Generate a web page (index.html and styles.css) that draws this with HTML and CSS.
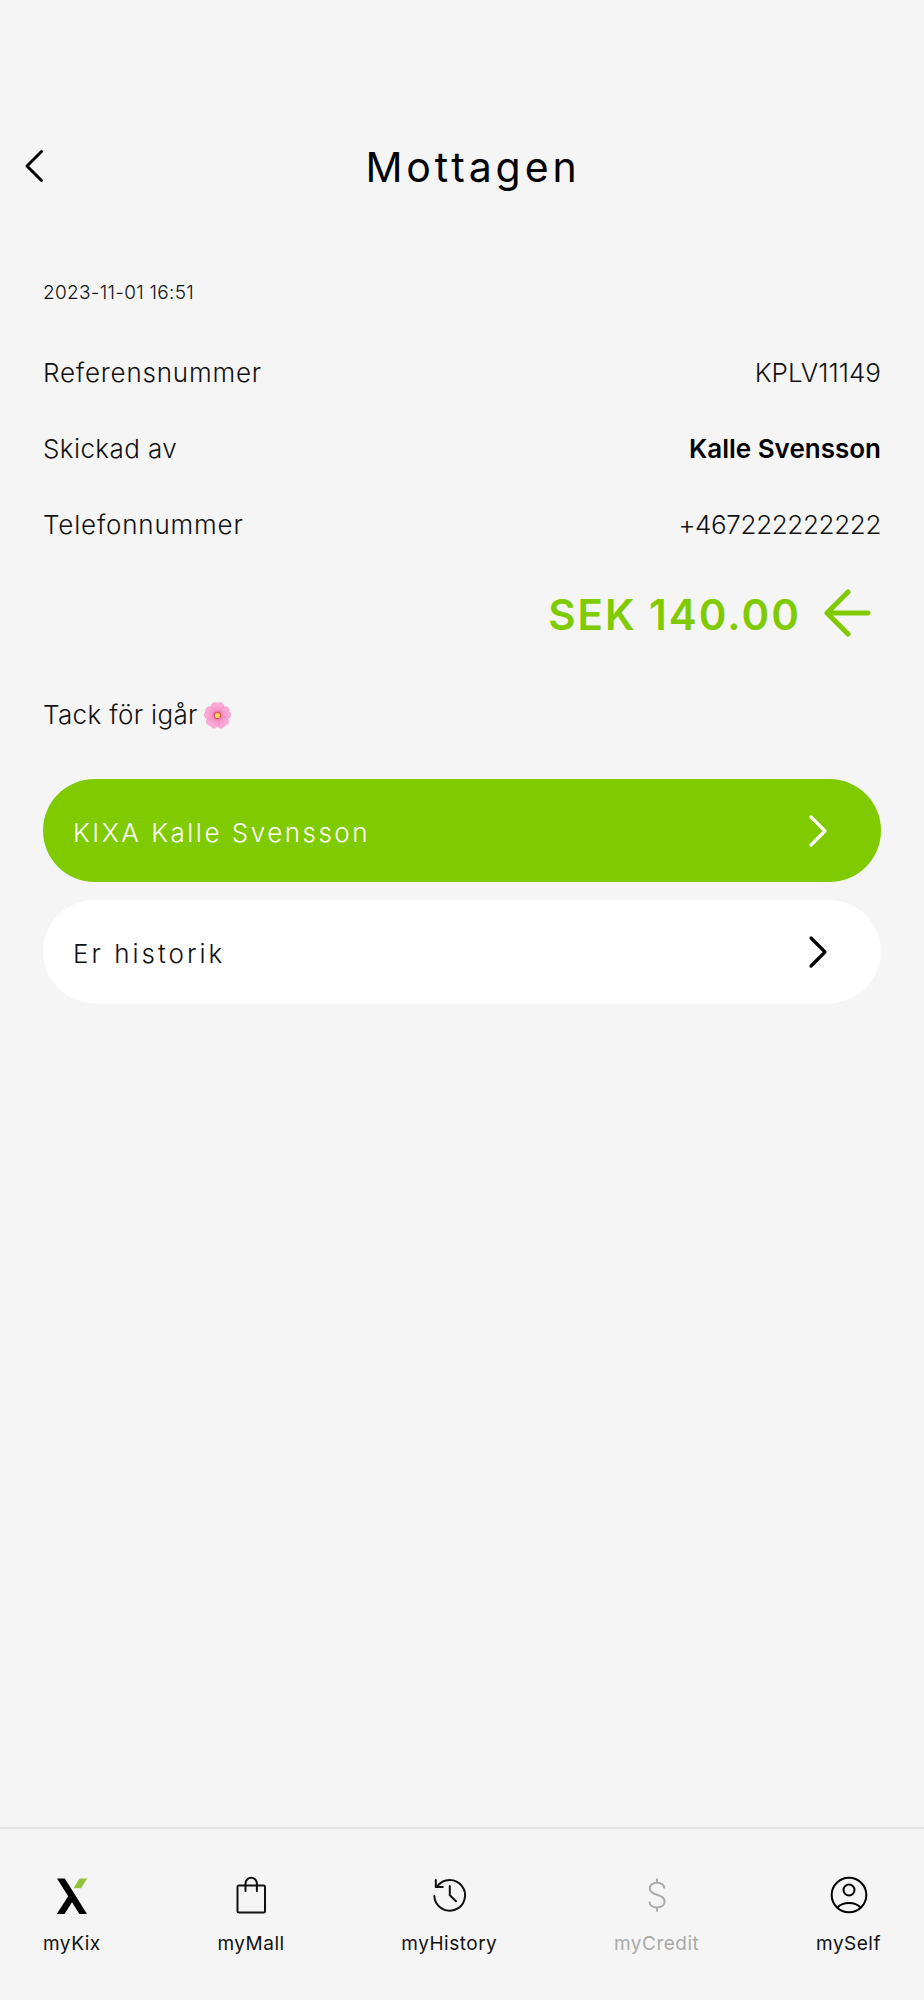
FILE: index.html
```html
<!DOCTYPE html>
<html lang="sv">
<head>
<meta charset="utf-8">
<title>Mottagen</title>
<link rel="stylesheet" href="styles.css">
</head>
<body>
<div class="screen">
  <header class="header">
    <svg class="back" viewBox="0 0 20 34" fill="none"><path d="M17.500 2.500 3 17l14.500 14.500"/></svg>
    <h1 class="title">Mottagen</h1>
  </header>
  <main class="content">
    <p class="date">2023-11-01 16:51</p>
    <dl class="details">
      <div class="row"><dt class="wide">Referensnummer</dt><dd>KPLV11149</dd></div>
      <div class="row"><dt>Skickad av</dt><dd class="strong">Kalle Svensson</dd></div>
      <div class="row"><dt class="wide">Telefonnummer</dt><dd class="phone">+467222222222</dd></div>
    </dl>
    <div class="amount">
      <span>SEK 140.00</span>
      <svg class="arrow" viewBox="0 0 48 48" fill="none"><path d="M25 3 4 24l21 21M4 24H45"/></svg>
    </div>
    <p class="message"><span>Tack för igår</span>
      <svg class="flower" viewBox="-13 -13 26 26">
        <defs>
          <radialGradient id="petal" gradientUnits="userSpaceOnUse" cx="0" cy="0" r="13"><stop offset=".15" stop-color="#e8559b"/><stop offset=".45" stop-color="#f797cc"/><stop offset="1" stop-color="#fcb4de"/></radialGradient>
          <path id="p" d="M0 0C-4-2-7-6-5.800-9.800-5-12.300-2-13.300 0-11.600 2-13.300 5-12.300 5.800-9.800 7-6 4-2 0 0Z"/>
        </defs>
        <g fill="url(#petal)" stroke="#ee86bf" stroke-width=".5"><use href="#p"/><use href="#p" transform="rotate(72)"/><use href="#p" transform="rotate(144)"/><use href="#p" transform="rotate(216)"/><use href="#p" transform="rotate(288)"/></g>
        <circle r="3.300" fill="#c8604f"/><circle r="2.500" fill="#ffd45a"/>
      </svg>
    </p>
    <div class="actions">
      <a class="pill primary"><span>KIXA Kalle Svensson</span><svg class="chev" viewBox="0 0 20 34" fill="none"><path d="M3 3l14 14L3 31"/></svg></a>
      <a class="pill"><span class="history">Er historik</span><svg class="chev" viewBox="0 0 20 34" fill="none"><path d="M3 3l14 14L3 31"/></svg></a>
    </div>
  </main>
  <nav class="tabs">
    <a class="tab"><svg viewBox="0 0 40 40"><path fill="#000" d="M5 3.500h7.800L35 39h-7.600L20 27.200 12.500 39H4.800L16.200 21.200Z"/><path fill="#94c23c" d="M27.500 3.500h7.700L29 13.200h-7.500Z"/></svg><span>myKix</span></a>
    <a class="tab"><svg viewBox="0 0 40 40" fill="none" stroke="#111" stroke-width="2"><rect x="6.500" y="10.500" width="27.500" height="27" rx="1.500"/><path stroke-linecap="round" d="M14.500 16V8.500a5.700 5.700 0 0 1 11.400 0V16"/></svg><span>myMall</span></a>
    <a class="tab"><svg viewBox="0 0 40 40" fill="none" stroke="#111" stroke-width="2" stroke-linecap="round" stroke-linejoin="round"><path d="M5.300 21A15.400 15.400 0 1 0 8.200 11.300"/><path d="M6.800 5v7h7M20.800 11v9.300l6.200 6"/></svg><span>myHistory</span></a>
    <a class="tab off"><svg viewBox="0 0 40 40" fill="none" stroke="#aaa" stroke-width="2"><path d="M20 3.500V8M20 32v4.500M27.300 13.500C27.300 10 24.500 7.700 20 7.700s-7.200 2.500-7.200 5.800c0 3.700 3 5 7.200 6.300 4.500 1.300 7.600 2.800 7.600 6.700 0 3.500-3 5.900-7.600 5.900s-7.600-2.400-7.600-6"/></svg><span>myCredit</span></a>
    <a class="tab"><svg viewBox="0 0 40 40" fill="none" stroke="#000" stroke-width="2"><circle cx="20" cy="20" r="17.300"/><circle cx="20" cy="15" r="5.500"/><path d="M8.500 32.500c5.500-6 17.500-6 23 0"/></svg><span>mySelf</span></a>
  </nav>
</div>
</body>
</html>
```
FILE: styles.css
```css
* { box-sizing: border-box; }
body { margin: 0; background: #f5f5f5; color: #111; font-family: Inter, "Noto Sans", sans-serif; font-weight: 300; }
h1, p, dl, dd { margin: 0; }
svg { display: block; flex: none; }
.screen { width: 924px; height: 2000px; display: flex; flex-direction: column; overflow: hidden; }
.header { display: grid; grid-template-columns: 60px 1fr 38px; align-items: center; height: 60px; margin-top: 137px; }
.back { width: 20px; height: 34px; margin: -2px 0 0 24px; stroke: #000; stroke-width: 3; stroke-linecap: round; stroke-linejoin: round; }
.title { text-align: center; font-size: 41px; line-height: 60px; font-weight: 400; letter-spacing: 3.900px; color: #000; }
.content { flex: 1; padding: 76px 43px 0 43px; }
.date { font-size: 19px; line-height: 40px; letter-spacing: .3px; font-weight: 350; }
.details { margin-top: 22px; font-size: 26px; letter-spacing: .4px; }
.row { display: flex; justify-content: space-between; height: 76px; line-height: 76px; }
.wide { letter-spacing: .800px; }
.row dd { letter-spacing: 0; }
.row .phone { letter-spacing: -.35px; }
.strong { font-weight: 600; color: #000; }
.amount { display: flex; justify-content: flex-end; align-items: center; height: 76px; margin-top: 13px; padding-right: 10px; gap: 22px; font-size: 42px; font-weight: 600; letter-spacing: 2px; color: #7fcb00; }
.arrow { width: 48px; height: 48px; margin-top: -2px; stroke: #7fcb00; stroke-width: 5; stroke-linecap: round; stroke-linejoin: round; }
.message { display: flex; align-items: center; gap: 6px; margin-top: 43px; font-size: 26px; line-height: 40px; letter-spacing: .35px; }
.flower { width: 27px; height: 27px; }
.actions { display: flex; flex-direction: column; gap: 18px; margin-top: 44px; }
.pill { display: flex; align-items: center; justify-content: space-between; height: 103px; padding: 0 53px 0 30px; border-radius: 52px; background: #fff; font-size: 26px; letter-spacing: 2.500px; color: #111; }
.pill span { padding-top: 3px; }
.pill .history { letter-spacing: 3px; }
.primary { background: #7fcb00; color: #fff; }
.chev { width: 20px; height: 34px; stroke: #000; stroke-width: 3.200px; stroke-linecap: round; stroke-linejoin: round; }
.primary .chev { stroke: #fff; }
.tabs { display: flex; justify-content: space-between; height: 173px; padding: 46px 43px 0; border-top: 2px solid #e0e0e0; font-size: 19px; font-weight: 400; letter-spacing: .5px; }
.tab { display: flex; flex-direction: column; align-items: center; gap: 14px; line-height: 30px; }
.tab svg { width: 40px; height: 40px; }
.off { color: #aaa; }
```
